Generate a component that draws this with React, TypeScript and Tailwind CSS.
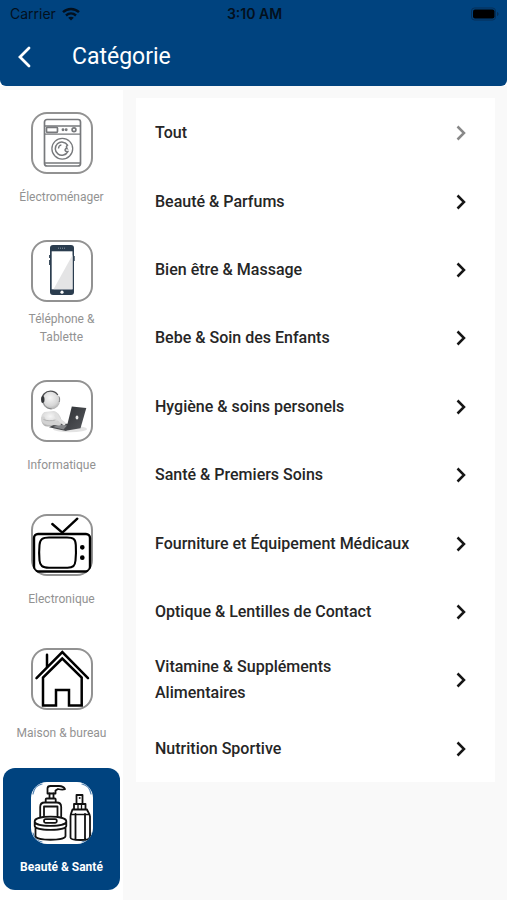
import { useState } from "react";
import type { ReactNode } from "react";
import clsx from "clsx";

type Category = {
  id: string;
  label: string;
  icon: ReactNode;
  twoLines?: boolean;
};

function WasherIcon() {
  return (
    <g fill="none" stroke="#77797c" strokeWidth="1.3">
      <rect x="13.5" y="7.5" width="36" height="46.5" rx="2.5" strokeWidth="1.7" />
      <path d="M13.5 14h36M13.5 22.2h36M13.5 51h36" />
      <rect x="15.5" y="15.3" width="11" height="5" rx="1" strokeWidth="1.7" />
      <circle cx="32" cy="17.7" r="0.8" />
      <circle cx="35.2" cy="17.7" r="0.8" />
      <circle cx="43" cy="17.7" r="1.9" strokeWidth="1.7" />
      <circle cx="31.3" cy="36.7" r="10.4" />
      <path d="M36.5 33.2a6.6 6.6 0 1 0 .3 6.4c-1.9.2-3-.7-2.7-2 .2-.8 1-1.2 1.9-1-.8-1.2-.7-2.5.5-3.4z" strokeWidth="1.5" />
      <path d="M27.5 36.500c0-1.900 1.100-3.200 2.900-3.600" />
    </g>
  );
}

function PhoneIcon() {
  return (
    <g>
      <path d="M18.6 15v3M18.6 20v5M43.2 16v5" stroke="#2b3d4f" strokeWidth="1" />
      <rect x="19" y="5" width="24" height="50" rx="3" fill="#2b3d4f" />
      <rect x="20.7" y="11.3" width="20.8" height="38" fill="#ffffff" />
      <path d="M41.5 15v34.3H22.5z" fill="#e4e4e5" />
      <path d="M27 8.2h8" stroke="#8d99a5" strokeWidth="1" strokeDasharray="1 1" />
      <circle cx="31" cy="52.2" r="1.6" fill="#ffffff" />
    </g>
  );
}

function LaptopIcon() {
  return (
    <g>
      <defs>
        <radialGradient id="skin" cx="0.45" cy="0.35" r="0.7">
          <stop offset="0" stopColor="#f6f6f6" />
          <stop offset="0.65" stopColor="#d6d6d6" />
          <stop offset="1" stopColor="#a3a3a3" />
        </radialGradient>
        <linearGradient id="lid" x1="0" y1="0" x2="1" y2="1">
          <stop offset="0" stopColor="#303236" />
          <stop offset="1" stopColor="#55585c" />
        </linearGradient>
      </defs>
      <ellipse cx="39" cy="49" rx="17" ry="3.2" fill="#e3e3e3" />
      <path d="M13.500 32c-3 1.500-4 6-3 9.500 1 3.500 3 5 6 5h12l2-6c-1-5-4-9-8-9.500z" fill="url(#skin)" />
      <path d="M18 47.300l9-4.300 12 1-4 7z" fill="#46484b" />
      <path d="M22 47l6-2.500 8 1-3.500 4z" fill="#85878a" />
      <path d="M12 38.500c1 3.500 5 5 10 4.500l6 .5" fill="none" stroke="#d2d2d2" strokeWidth="4" strokeLinecap="round" />
      <path d="M25 35.500c2 3.500 4.500 6 8 8" fill="none" stroke="#e0e0e0" strokeWidth="3.500" strokeLinecap="round" />
      <path d="M12.500 39.500c3 1.500 8 1.500 12 .5" fill="none" stroke="#a9a9a9" strokeWidth="0.800" />
      <circle cx="20" cy="20.500" r="9" fill="url(#skin)" />
      <path d="M11.200 20c-.6-5 3.300-8.800 8.300-8.800 3.200 0 5.800 1.500 7.300 3.800" fill="none" stroke="#4c4d4f" strokeWidth="1.300" />
      <ellipse cx="11.800" cy="19.500" rx="1.700" ry="3.600" fill="#343639" />
      <path d="M12.500 23c1.500 4 4.500 5.700 8 5.700" fill="none" stroke="#77787a" strokeWidth="0.900" />
      <path d="M28 16.500c.8 1.500.8 3.500.2 5.500" fill="none" stroke="#77787a" strokeWidth="0.900" />
      <path d="M40.800 26.500l14.500 1.600-5.800 20.200-14.700 2.500z" fill="url(#lid)" />
      <ellipse cx="46" cy="37.500" rx="1.400" ry="2" fill="#e8e8e8" />
    </g>
  );
}

function TvIcon() {
  return (
    <g fill="none" stroke="#000000" strokeWidth="2.4" strokeLinecap="round">
      <rect x="3" y="20" width="56" height="37.5" rx="4" />
      <path d="M18 23.500h18c6.500 0 8.500 1.500 8.800 7.500.3 5 .3 10-.3 15.500-.5 5.500-2.500 7-8 7.200H18c-6.500-.2-9-1.700-9.500-7.200-.5-5.500-.5-10.500 0-15.500.5-6 3-7.500 9.500-7.500z" strokeWidth="2.1" />
      <path d="M31.300 18.700L21.300 10M31.300 18.700l15-14" />
      <circle cx="51.3" cy="33.3" r="1.5" fill="#000000" strokeWidth="1.7" />
      <circle cx="51.3" cy="43.7" r="1.5" fill="#000000" strokeWidth="1.7" />
    </g>
  );
}

function HouseIcon() {
  return (
    <g fill="none" stroke="#000000" strokeWidth="2.5" strokeLinecap="round">
      <path d="M5.500 30.200L31.300 4l25.700 26.200M16 19V6.800" />
      <path d="M31.300 10.500L12 29.600v28h13V42h13v15.600h12.700v-28z" />
    </g>
  );
}

function BeautyIcon() {
  return (
    <g fill="none" stroke="#111111" strokeWidth="1.8" strokeLinejoin="round" strokeLinecap="round">
      <path d="M2 12C3 6 6 3 11 2M51 2c5 1 8 4 9 10M2 51c1 5 4 8 9 9M51 60c5-1 8-4 9-9" stroke="#5384b4" strokeWidth="1.2" />
      <path d="M16.500 11.500V6.500c0-1.500 1-2.500 3-2.500h8.500c3 0 5 1 6 3.200-2.500.9-5 .3-7-.2l-2.500 1.500v3z" />
      <path d="M18.500 11.500v5M22.500 11.500v5M14.700 20.500v-3c0-.7.4-1 1-1h8c.6 0 1 .3 1 1v3M9.200 34.500V25c0-3 1.500-4.500 4.500-4.500h12c3 0 4.500 1.500 4.500 4.500v9.500M13 33.500V24.500h13.500v9" />
      <path d="M3.700 39.300c0-6.200 31.600-6.200 31.600 0s-31.600 6.200-31.600 0zM3.700 39.300v4.500c0 5.500 31.600 5.500 31.600 0v-4.500M4.500 46v8c0 5 30 5 30 0v-8" />
      <rect x="13" y="37.200" width="12.800" height="3.600" rx="1.500" />
      <path d="M45.500 22v-9h6v9M43 27.500V22h11.500v5.500M41.500 27.500H56c.5 2 3 4 3 7v21c0 1.500-3 2.500-9.800 2.500s-9.700-1-9.700-2.500v-21c0-3 1.500-5 2-7zM44.500 32v25.500M54 32v25.500" />
      <path d="M47 22v5M50.500 22v5M40.500 32.500h17.500" strokeWidth="1.300" />
      <circle cx="48.500" cy="16" r="0.500" strokeWidth="1" />
    </g>
  );
}

function Chevron({ muted }: { muted?: boolean }) {
  return (
    <svg
      viewBox="0 0 10 16"
      className={clsx("mr-[29px] h-4 w-2.5 shrink-0", muted ? "text-[#888888]" : "text-[#161616]")}
      fill="none"
      stroke="currentColor"
      strokeWidth="2.5"
      aria-hidden="true"
    >
      <path d="M1.500 1.500L8 8l-6.500 6.500" />
    </svg>
  );
}

const categories: Category[] = [
  { id: "electromenager", label: "Électroménager", icon: <WasherIcon /> },
  { id: "telephone", label: "Téléphone & Tablette", icon: <PhoneIcon />, twoLines: true },
  { id: "informatique", label: "Informatique", icon: <LaptopIcon /> },
  { id: "electronique", label: "Electronique", icon: <TvIcon /> },
  { id: "maison", label: "Maison & bureau", icon: <HouseIcon /> },
  { id: "beaute", label: "Beauté & Santé", icon: <BeautyIcon /> },
];

const subCategories = [
  "Tout",
  "Beauté & Parfums",
  "Bien être & Massage",
  "Bebe & Soin des Enfants",
  "Hygiène & soins personels",
  "Santé & Premiers Soins",
  "Fourniture et Équipement Médicaux",
  "Optique & Lentilles de Contact",
  "Vitamine & Suppléments Alimentaires",
  "Nutrition Sportive",
];

function StatusBar() {
  return (
    <div className="grid h-7 grid-cols-3 items-center pr-2 pl-2.5 font-['Inter',sans-serif] text-sm text-[#03101d]">
      <div className="flex items-center gap-1.5">
        <span>Carrier</span>
        <svg viewBox="0 0 18 14" className="h-3.5 w-4.5" fill="none" stroke="#03101d" strokeWidth="2.4" aria-hidden="true">
          <path d="M1 5.200c4.500-4.300 11.500-4.300 16 0M4 8.500c3-2.700 7-2.700 10 0" />
          <path d="M9 13.500L6.200 10.700c1.500-1.400 4.100-1.400 5.600 0z" fill="#03101d" stroke="none" />
        </svg>
      </div>
      <span className="text-center font-semibold">3:10 AM</span>
      <svg viewBox="0 0 28 14" className="h-3.5 w-7 justify-self-end" aria-hidden="true">
        <rect x="0.5" y="1" width="24" height="12" rx="3" fill="none" stroke="#062f57" />
        <rect x="2" y="2.5" width="21.5" height="9" rx="2" fill="#000000" />
        <path d="M26 5v4c1-.3 1.500-1 1.500-2s-.5-1.700-1.500-2z" fill="#062f57" />
      </svg>
    </div>
  );
}

export default function App() {
  const [activeId, setActiveId] = useState("beaute");

  return (
    <div className="min-h-screen bg-[#f9f9f9] font-['Roboto',sans-serif]">
      <div className="bg-white">
        <header className="rounded-b-md bg-[#00437f]">
          <StatusBar />
          <div className="flex h-[58px] items-center gap-10">
            <button type="button" aria-label="Retour" className="pl-4">
              <svg viewBox="0 0 16 22" className="h-5.5 w-4" fill="none" stroke="#ffffff" strokeWidth="2.8" strokeLinecap="round" aria-hidden="true">
                <path d="M13 2L4 11l9 9" />
              </svg>
            </button>
            <h1 className="text-[23px] text-white">Catégorie</h1>
          </div>
        </header>
      </div>

      <div className="flex items-start">
        <nav className="mt-1 flex min-h-[810px] w-[123px] shrink-0 flex-col gap-3 bg-white px-[3px] pt-2">
          {categories.map((category) => {
            const isActive = category.id === activeId;

            return (
              <button
                key={category.id}
                type="button"
                onClick={() => setActiveId(category.id)}
                className={clsx(
                  "flex h-[122px] flex-col items-center justify-center rounded-xl px-3 text-xs",
                  category.twoLines ? "gap-2" : "gap-3.5",
                  isActive ? "bg-[#00437f] font-bold text-white" : "text-[#929292]",
                )}
              >
                <span
                  className={clsx(
                    "grid size-[62px] shrink-0 overflow-hidden rounded-2xl bg-white",
                    !isActive && "ring-2 ring-[#929292] ring-inset",
                  )}
                >
                  <svg viewBox="0 0 62 62" className="size-full" aria-hidden="true">
                    {category.icon}
                  </svg>
                </span>
                <span className={clsx("leading-[18px]", !category.twoLines && "whitespace-nowrap")}>
                  {category.label}
                </span>
              </button>
            );
          })}
        </nav>

        <main className="min-w-0 flex-1 pt-3 pr-3 pl-[13px]">
          <ul className="grid min-h-[684px] auto-rows-fr bg-white">
            {subCategories.map((name, index) => (
              <li key={name} className="grid">
                <a href="#" className="flex items-center justify-between gap-10 pt-0.5 pl-[19px]">
                  <span className="text-base leading-[26px] font-medium text-[#262626]">{name}</span>
                  <Chevron muted={index === 0} />
                </a>
              </li>
            ))}
          </ul>
        </main>
      </div>
    </div>
  );
}
